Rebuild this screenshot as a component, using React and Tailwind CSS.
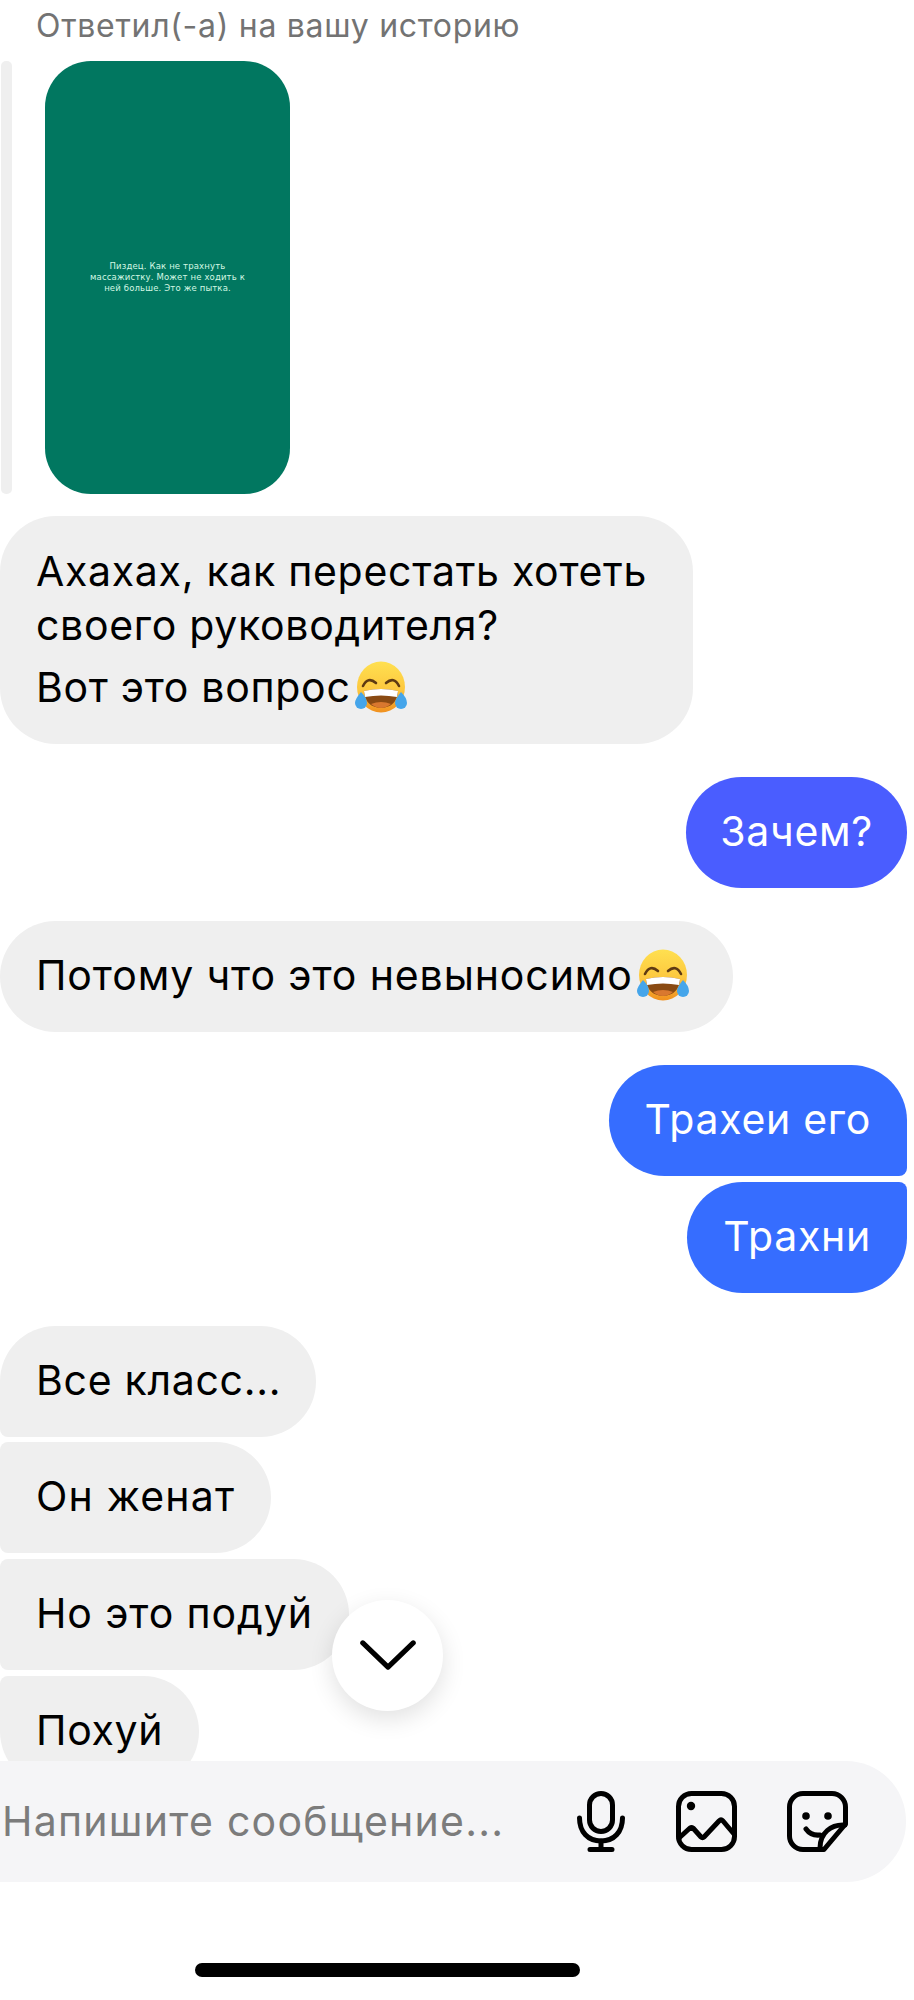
import React from "react";

function Laugh({ id }) {
  return (
    <svg viewBox="0 0 56 52" className="inline-block w-[56px] h-[52px] shrink-0 ml-[2px]">
      <defs>
        <linearGradient id={id} x1="0" y1="0" x2="0" y2="1">
          <stop offset="0%" stopColor="#ffe050" />
          <stop offset="55%" stopColor="#fdc83f" />
          <stop offset="100%" stopColor="#f0901f" />
        </linearGradient>
      </defs>
      <ellipse cx="28" cy="26" rx="24" ry="25.500" fill={`url(#${id})`} />
      <path d="M10 25 Q15 15 23 22" fill="none" stroke="#5f3a12" strokeWidth="2.600" strokeLinecap="round" />
      <path d="M46 25 Q41 15 33 22" fill="none" stroke="#5f3a12" strokeWidth="2.600" strokeLinecap="round" />
      <path d="M11 30 Q28 26 45 30 Q44 46 28 47 Q12 46 11 30Z" fill="#8a4a12" />
      <path d="M11 30 Q28 26 45 30 L44 36 Q28 33 12 36Z" fill="#ffffff" />
      <path d="M18 43 Q28 39 38 43 Q33 47 28 47 Q23 47 18 43Z" fill="#d9782f" />
      <path d="M8 31 Q2 38 2 42 A6 6 0 0 0 14 42 Q14 37 8 31Z" fill="#45a5ea" />
      <path d="M48 31 Q42 38 42 42 A6 6 0 0 0 54 42 Q54 37 48 31Z" fill="#45a5ea" />
    </svg>
  );
}

function Bubble({ children, className = "" }) {
  return (
    <div className={`h-[111px] shrink-0 flex items-center pb-[3px] text-[41px] tracking-[0.7px] leading-[58px] ${className}`}>
      {children}
    </div>
  );
}

function Mic() {
  return (
    <svg viewBox="0 0 48 61" className="w-[48px] h-[61px]" fill="none" stroke="#000" strokeWidth="5" strokeLinecap="round">
      <rect x="12.500" y="2.500" width="23" height="38" rx="11.500" />
      <path d="M2.500 27 C2.500 41 11 50 24 50 C37 50 45.500 41 45.500 27" />
      <path d="M24 50 V58.500 M13 58.500 H35" />
    </svg>
  );
}

function Picture() {
  return (
    <svg viewBox="0 0 61 61" className="w-[61px] h-[61px]" fill="none" stroke="#000" strokeWidth="5" strokeLinecap="round" strokeLinejoin="round">
      <rect x="2.500" y="2.500" width="56" height="56" rx="13" />
      <circle cx="15" cy="15" r="4.200" fill="#000" stroke="none" />
      <path d="M3 47 L14 37 Q15.500 36 17 37 L25 46 Q26.500 47.500 28 46 L43 30 Q45 28 47 30 L58 43" />
    </svg>
  );
}

function Sticker() {
  return (
    <svg viewBox="0 0 61 61" className="w-[61px] h-[61px]" fill="none" stroke="#000" strokeWidth="5" strokeLinecap="round" strokeLinejoin="round">
      <path d="M16 2.500 H45 A13.500 13.500 0 0 1 58.500 16 V33 L37 58.500 H16 A13.500 13.500 0 0 1 2.500 45 V16 A13.500 13.500 0 0 1 16 2.500Z" />
      <circle cx="19" cy="25" r="3.800" fill="#000" stroke="none" />
      <circle cx="41" cy="25" r="3.800" fill="#000" stroke="none" />
      <path d="M19 38 Q24 45 33 44" />
      <path d="M58 34 C44 33 33 42 33 57" />
    </svg>
  );
}

export default function App() {
  return (
    <div className="w-[914px] h-[2000px] bg-white flex flex-col overflow-hidden font-['Inter','Liberation_Sans',sans-serif] text-black">
      <div className="relative h-[1761px] shrink-0 overflow-hidden flex flex-col">
        <div className="h-[52px] shrink-0 pl-9 flex items-center text-[32px] tracking-[0.7px] text-[#737373]">
          Ответил(-а) на вашу историю
        </div>
        <div className="mt-[9px] h-[433px] shrink-0 flex">
          <div className="ml-[1px] w-[11px] rounded-[5px] bg-[#efefef]" />
          <div className="ml-[33px] w-[245px] rounded-[46px] bg-[#017760] flex items-center justify-center">
            <p className="w-[170px] text-center text-[8.500px] leading-[11px] tracking-[0.15px] text-[#d4f8e4] font-['DejaVu_Sans',sans-serif]">
              Пиздец. Как не трахнуть массажистку. Может не ходить к ней больше. Это же пытка.
            </p>
          </div>
        </div>

        <div className="mt-[22px] w-[693px] h-[228px] shrink-0 rounded-[56px] bg-[#efefef] pl-9 pt-[28px] text-[41px] tracking-[0.7px] leading-[54px]">
          <div>Ахахах, как перестать хотеть</div>
          <div>своего руководителя?</div>
          <div className="flex items-center h-[70px]">Вот это вопрос<Laugh id="a" /></div>
        </div>

        <Bubble className="mt-[33px] self-end mr-[7px] rounded-[56px] bg-[#4a5dff] text-white px-[34px]">Зачем?</Bubble>

        <Bubble className="mt-[33px] self-start rounded-[56px] bg-[#efefef] pl-9 pr-[42px]">
          <span className="tracking-[0.9px]">Потому что это невыносимо</span><Laugh id="b" />
        </Bubble>

        <Bubble className="mt-[33px] self-end mr-[7px] rounded-l-[56px] rounded-tr-[56px] rounded-br-[8px] bg-[#366dff] text-white px-9">Трахеи его</Bubble>
        <Bubble className="mt-[6px] self-end mr-[7px] rounded-l-[56px] rounded-br-[56px] rounded-tr-[8px] bg-[#366dff] text-white px-9">Трахни</Bubble>

        <Bubble className="mt-[33px] self-start rounded-r-[56px] rounded-tl-[56px] rounded-bl-[8px] bg-[#efefef] pl-9 pr-[35px]">Все класс...</Bubble>
        <Bubble className="mt-[5px] self-start rounded-r-[56px] rounded-l-[8px] bg-[#efefef] pl-9 pr-9 tracking-[1.2px]">Он женат</Bubble>
        <Bubble className="mt-[6px] self-start rounded-r-[56px] rounded-l-[8px] bg-[#efefef] pl-9 pr-9 tracking-[0.9px]">Но это подуй</Bubble>
        <Bubble className="mt-[6px] self-start rounded-r-[56px] rounded-tl-[8px] rounded-bl-[56px] bg-[#efefef] pl-9 pr-9">Похуй</Bubble>

        <button className="absolute left-[332px] top-[1600px] w-[111px] h-[111px] rounded-full bg-white shadow-[0_8px_24px_rgba(0,0,0,0.12)] flex items-center justify-center">
          <svg viewBox="0 0 60 32" className="w-[56px] h-[30px] mt-[-2px]" fill="none" stroke="#000" strokeWidth="5.500" strokeLinecap="round" strokeLinejoin="round">
            <path d="M3 3 L30 29 L57 3" />
          </svg>
        </button>
      </div>

      <div className="h-[121px] w-[906px] shrink-0 rounded-r-[60px] bg-[#f5f5f7] flex items-center pl-[2px] pr-[58px]">
        <span className="flex-1 text-[41px] tracking-[1.25px] text-[#7c7c7c] whitespace-nowrap">Напишите сообщение...</span>
        <div className="flex items-center"><Mic /></div>
        <div className="ml-[51px]"><Picture /></div>
        <div className="ml-[50px]"><Sticker /></div>
      </div>

      <div className="flex-1 flex justify-center items-start">
        <div className="mt-[81px] ml-[-140px] w-[385px] h-[14px] rounded-full bg-black" />
      </div>
    </div>
  );
}
